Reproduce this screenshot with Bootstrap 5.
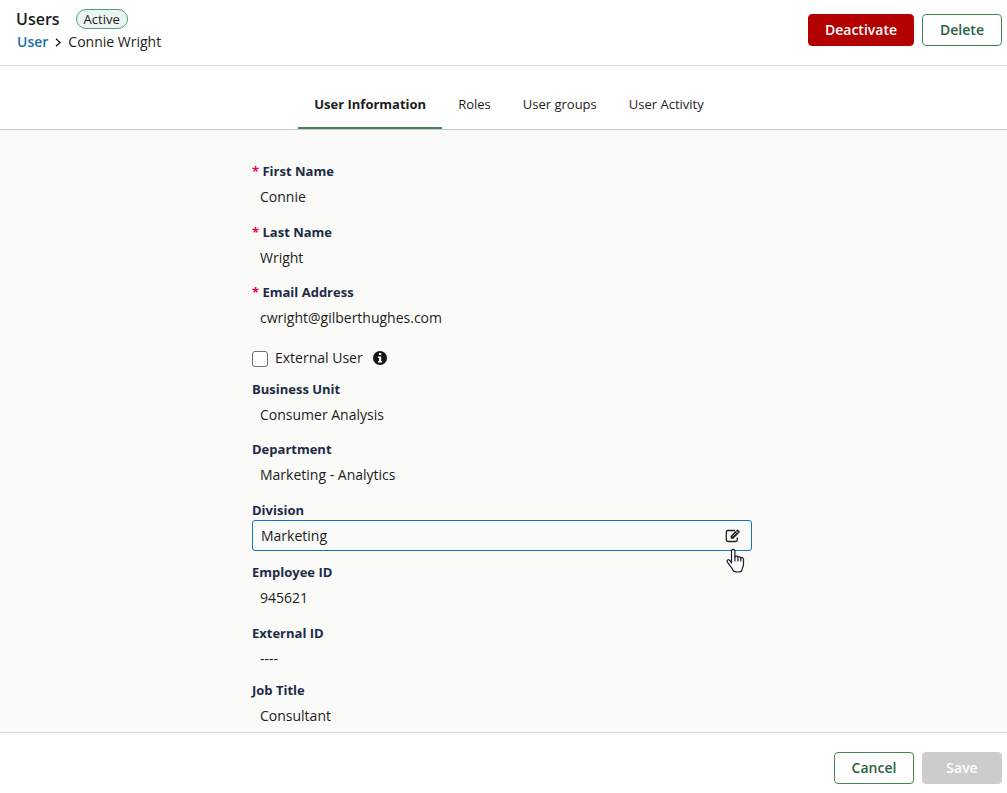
<!DOCTYPE html>
<html lang="en">
<head>
<meta charset="utf-8">
<meta name="viewport" content="width=device-width, initial-scale=1">
<title>Users - Connie Wright</title>
<link href="https://cdn.jsdelivr.net/npm/bootstrap@5.3.0/dist/css/bootstrap.min.css" rel="stylesheet">
<style>
  body { font-family: "Open Sans", "Noto Sans", sans-serif; font-size: 14px; line-height: 20px; color: #1c1c1c; }
  .top-bar { padding: 9px 5px 13px 16px; border-bottom: 1px solid #dcdcdc; }
  .page-title { font-size: 16px; line-height: 20px; font-weight: 600; }
  .status { font-size: 13px; font-weight: 400; line-height: 18px; padding: 0 7px; color: #1c1c1c; background: #eaf4f0; border: 1px solid #4f9d80; }
  .crumbs { line-height: 20px; margin-top: 3px; padding-left: 1px; gap: 7px; }
  .crumbs a { color: #1b6fa8; font-weight: 600; text-decoration: none; }
  .top-actions { margin-top: 5px; }
  .btn { --bs-btn-font-size: 14px; --bs-btn-font-weight: 600; --bs-btn-line-height: 20px; --bs-btn-padding-y: 5px; --bs-btn-padding-x: 16px; --bs-btn-border-radius: 4px; min-width: 80px; }
  .btn-stop { --bs-btn-color: #fff; --bs-btn-bg: #b30000; --bs-btn-border-color: #b30000; --bs-btn-hover-color: #fff; --bs-btn-hover-bg: #970000; }
  .btn-line { --bs-btn-color: #2b6148; --bs-btn-bg: #fff; --bs-btn-border-color: #448354; --bs-btn-hover-color: #2b6148; --bs-btn-hover-bg: #eef5f0; }
  .btn-save { --bs-btn-disabled-color: #fff; --bs-btn-disabled-bg: #ccc; --bs-btn-disabled-border-color: #ccc; --bs-btn-disabled-opacity: 1; }
  .tab-bar { padding: 14px 0 0 11px; border-bottom: 1px solid #cbcbcb; }
  .tab-bar .nav-link { font-size: 13px; line-height: 20px; padding: 14px 16px 13px; color: #1c1c1c; border-bottom: 2px solid transparent; }
  .tab-bar .nav-link.active { font-weight: 700; border-bottom-color: #448354; }
  main { background: #fafaf8; padding: 31px 3px 0 0; }
  .user-form { max-width: 500px; }
  .field { margin-bottom: 10px; }
  .field.snug { margin-bottom: 9px; }
  .field.loose { margin-bottom: 11px; }
  .field.tight { margin-bottom: 6px; }
  .field:last-child { margin-bottom: 0; }
  .form-label { font-size: 13px; font-weight: 700; line-height: 20px; color: #1d2b47; margin: 0; }
  .req { color: #e6004c; }
  .form-control { font-size: 14px; line-height: 19px; padding: 5px 7px; border: 1px solid transparent; border-radius: 3px; background: transparent; color: #1c1c1c; }
  .form-control::placeholder { color: #1c1c1c; opacity: 1; }
  .editing .form-control { border-color: #1173c7; padding: 5px 36px 5px 8px; }
  .edit-btn { right: 11px; top: 8px; width: 16px; height: 16px; line-height: 0; }
  .pointer { right: 7px; top: 28px; }
  .check-row { height: 29px; margin-bottom: 7px; }
  .check-row .form-check-input { width: 16px; height: 16px; margin: 2px 7px 0 0; border: 1px solid #707070; border-radius: 3px; }
  .info { margin-left: 10px; }
  .bottom-bar { padding: 19px 5px 9px; border-top: 1px solid #dcdcdc; }
</style>
</head>
<body>
<div class="d-flex flex-column vh-100">
  <header class="top-bar d-flex justify-content-between align-items-start bg-white">
    <div>
      <div class="d-flex align-items-center gap-3">
        <h1 class="page-title m-0">Users</h1>
        <span class="status rounded-pill">Active</span>
      </div>
      <nav class="crumbs d-flex align-items-center" aria-label="Breadcrumb">
        <a href="#">User</a>
        <svg width="6" height="9" viewBox="0 0 6 9" fill="none" stroke="#1c1c1c" stroke-width="1.4" aria-hidden="true"><path d="M1 .7 5 4.500 1 8.300"/></svg>
        <span>Connie Wright</span>
      </nav>
    </div>
    <div class="top-actions d-flex gap-2">
      <button type="button" class="btn btn-stop">Deactivate</button>
      <button type="button" class="btn btn-line">Delete</button>
    </div>
  </header>

  <nav class="tab-bar nav justify-content-center bg-white">
    <a class="nav-link active" aria-current="page" href="#">User Information</a>
    <a class="nav-link" href="#">Roles</a>
    <a class="nav-link" href="#">User groups</a>
    <a class="nav-link" href="#">User Activity</a>
  </nav>

  <main class="flex-grow-1 overflow-auto">
    <form class="user-form mx-auto" id="userForm">
      <div class="field">
        <label class="form-label d-block" for="first"><span class="req">*</span> First Name</label>
        <input class="form-control" id="first" value="Connie" required>
      </div>
      <div class="field snug">
        <label class="form-label d-block" for="last"><span class="req">*</span> Last Name</label>
        <input class="form-control" id="last" value="Wright" required>
      </div>
      <div class="field">
        <label class="form-label d-block" for="email"><span class="req">*</span> Email Address</label>
        <input class="form-control" id="email" type="email" value="cwright@gilberthughes.com" required>
      </div>
      <div class="check-row d-flex align-items-center">
        <input class="form-check-input" type="checkbox" id="external">
        <label for="external">External User</label>
        <svg class="info" width="14" height="14" viewBox="0 0 14 14" role="img" aria-label="Info"><circle cx="7" cy="7" r="7" fill="#161616"/><path fill="#fff" d="M6 2h2.200v2H6zM5 5.400h3.200v4.700h1V11.600H5V10.100h1V6.900H5z"/></svg>
      </div>
      <div class="field snug">
        <label class="form-label d-block" for="unit">Business Unit</label>
        <input class="form-control" id="unit" value="Consumer Analysis">
      </div>
      <div class="field">
        <label class="form-label d-block" for="dept">Department</label>
        <input class="form-control" id="dept" value="Marketing - Analytics">
      </div>
      <div class="field loose">
        <label class="form-label d-block" for="division">Division</label>
        <div class="editing position-relative">
          <input class="form-control" id="division" value="Marketing">
          <button type="button" class="edit-btn position-absolute border-0 bg-transparent p-0" aria-label="Edit">
            <svg width="16" height="16" viewBox="0 0 16 16" fill="none"><path d="M10 2.500H3a1.700 1.700 0 0 0-1.700 1.700v7.600A1.700 1.700 0 0 0 3 13.500h7.600a1.700 1.700 0 0 0 1.700-1.700V9.500" stroke="#222" stroke-width="1.300"/><path d="M5.600 10.700V8L12.400 1.200l2.700 2.700-6.800 6.800z" fill="#222"/><path d="M7.700 8.400l4-4M10.900 2.700l2.700 2.700" stroke="#fff" stroke-width=".7"/></svg>
          </button>
          <svg class="pointer position-absolute" width="19" height="26" viewBox="0 0 19 26" aria-hidden="true"><path d="M5.500 15V3a1.700 1.700 0 0 1 3.400 0v6a1.600 1.600 0 0 1 3 .5 1.600 1.600 0 0 1 2.900.8 1.500 1.500 0 0 1 2.700 1v5.200c0 2.200-1.500 3.500-1.500 5.200 0 1.700-1.500 2.300-4.200 2.300s-4.300-.5-5-2.300C6 19.500 4.300 18.300 3 16.400L1.300 13.800c-.9-1.500 1-2.900 2.200-1.700z" fill="#fff" stroke="#1b1b2b" stroke-width="1.200" stroke-linejoin="round"/><path d="M8.900 9v4.500M11.900 9.700v3.800M14.800 10.500v3" stroke="#1b1b2b" stroke-width="1.200"/></svg>
        </div>
      </div>
      <div class="field">
        <label class="form-label d-block" for="empid">Employee ID</label>
        <input class="form-control" id="empid" value="945621">
      </div>
      <div class="field tight">
        <label class="form-label d-block" for="extid">External ID</label>
        <input class="form-control" id="extid" placeholder="----">
      </div>
      <div class="field">
        <label class="form-label d-block" for="job">Job Title</label>
        <input class="form-control" id="job" value="Consultant">
      </div>
    </form>
  </main>

  <footer class="bottom-bar d-flex justify-content-end gap-2 bg-white">
    <button type="button" class="btn btn-line">Cancel</button>
    <button type="submit" form="userForm" class="btn btn-save" disabled>Save</button>
  </footer>
</div>
<script src="https://cdn.jsdelivr.net/npm/bootstrap@5.3.0/dist/js/bootstrap.bundle.min.js"></script>
</body>
</html>
